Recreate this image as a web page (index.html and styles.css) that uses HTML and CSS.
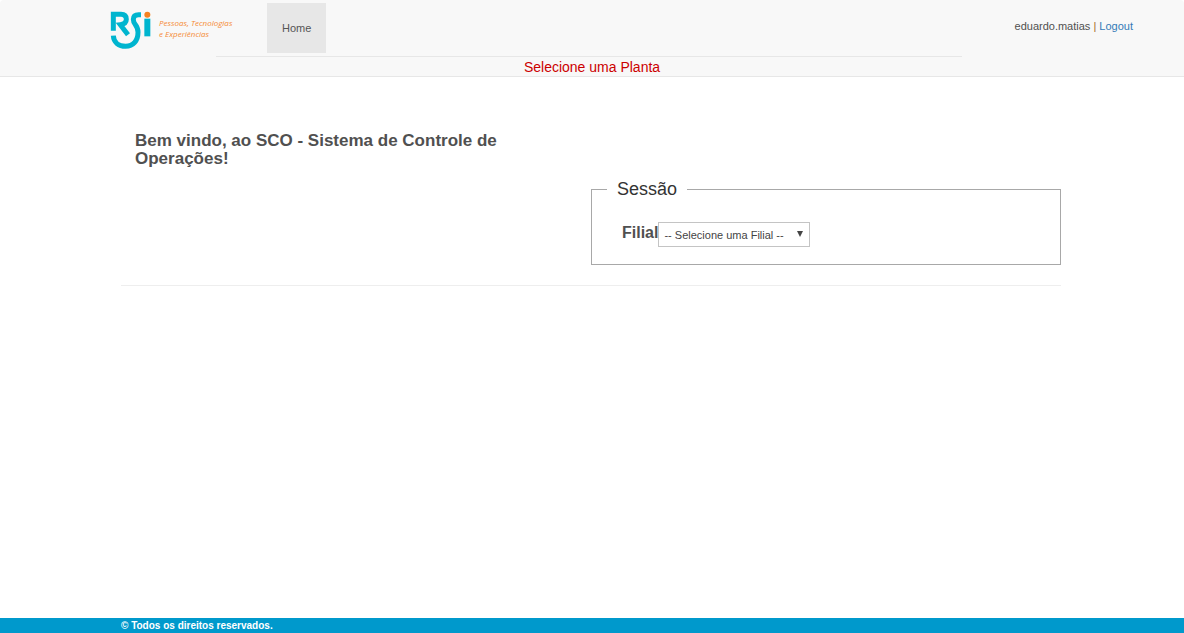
FILE: index.html
```html
<!DOCTYPE html>
<html lang="pt-BR">
<head>
<meta charset="utf-8">
<title>SCO - Sistema de Controle de Operações</title>
<link rel="stylesheet" href="styles.css">
</head>
<body>
<header class="header">
  <div class="bar">
    <div class="brand">
      <svg class="mark" viewBox="30 30 126 120" role="img" aria-label="RSI">
        <g fill="none" stroke="#00b5cf" stroke-width="15">
          <path d="M40 92V43H63Q79 43 79 58Q79 72 61 74L84 104"/>
          <path d="M123 44H116Q100 44 100 58Q100 67 106 74Q114 84 114 97C114 122 100 139 77 139C56 139 41 127 40 107"/>
          <path d="M142 56V109" stroke-width="18"/>
        </g>
        <circle cx="142" cy="44" r="9" fill="#f58220"/>
      </svg>
      <p class="tagline">Pessoas, Tecnologias<br>e Experiências</p>
    </div>
    <nav class="nav"><a class="nav-link" href="#">Home</a></nav>
    <div class="user">eduardo.matias <span class="sep">|</span> <a class="logout" href="#">Logout</a></div>
  </div>
  <p class="notice">Selecione uma Planta</p>
</header>
<main class="container">
  <div class="columns">
    <h1 class="welcome">Bem vindo, ao SCO - Sistema de Controle de Operações!</h1>
    <fieldset class="session">
      <legend class="legend">Sessão</legend>
      <div class="field">
        <label class="label" for="filial">Filial</label>
        <div class="picker">
          <select class="select" id="filial"><option>-- Selecione uma Filial --</option></select>
          <svg class="arrow" viewBox="0 0 6 6" aria-hidden="true"><path d="M0 0H6L3 6Z" fill="#444"/></svg>
        </div>
      </div>
    </fieldset>
  </div>
</main>
<footer class="footer"><p class="copyright">© Todos os direitos reservados.</p></footer>
</body>
</html>
```
FILE: styles.css
```css
* { box-sizing: border-box; }
body {
  margin: 0;
  min-height: 100vh;
  display: flex;
  flex-direction: column;
  background: #fff;
  color: #505050;
  font: 11px/16px "Liberation Sans", Arial, sans-serif;
}
p, h1 { margin: 0; }
a { text-decoration: none; }
.header {
  background: #f8f8f8;
  border-bottom: 1px solid #e7e7e7;
  border-radius: 4px 4px 0 0;
}
.bar {
  display: flex;
  align-items: flex-start;
  padding: 3px 51px 3px 110px;
}
.brand {
  display: flex;
  align-items: flex-start;
  width: 157px;
  padding-top: 7px;
}
.mark { width: 42px; height: 40px; }
.tagline {
  padding: 7px 0 0 7px;
  color: #f58a33;
  font: italic 8px/11px "Open Sans", sans-serif;
  white-space: nowrap;
}
.nav-link {
  display: block;
  padding: 17px 15px;
  background: #e7e7e7;
  color: #555;
}
.user { margin-left: auto; padding-top: 15px; }
.sep { color: #a56b2a; }
.logout { color: #337ab7; }
.notice {
  margin: 0 222px 0 216px;
  padding: 1px 0 0 6px;
  border-top: 1px solid #e7e7e7;
  color: #c00;
  font-size: 14px;
  line-height: 18px;
  text-align: center;
}
.container {
  width: 100%;
  max-width: 970px;
  margin: 0 auto;
  padding: 55px 16px 0 14px;
}
.columns {
  display: grid;
  grid-template-columns: 1fr 1fr;
  padding-bottom: 20px;
  border-bottom: 1px solid #eee;
}
.welcome {
  padding: 0 90px 0 14px;
  font-size: 17px;
  line-height: 18px;
}
.session {
  min-width: 0;
  margin: 45px 0 0;
  padding: 21px 30px 17px;
  border: 1px solid #a8a8a8;
}
.legend {
  margin-left: -15px;
  padding: 0 10px;
  color: #333;
  font-size: 18px;
  line-height: 24px;
}
.field { display: flex; align-items: flex-start; }
.label { font-size: 16px; font-weight: bold; line-height: 22px; }
.picker { position: relative; width: 152px; }
.select {
  display: block;
  width: 100%;
  height: 25px;
  padding: 0 5px;
  border: 1px solid #c4c4c4;
  border-radius: 0;
  background: #fff;
  color: #444;
  font: inherit;
  appearance: none;
}
.arrow {
  position: absolute;
  top: 9px;
  right: 7px;
  width: 6px;
  height: 6px;
  pointer-events: none;
}
.footer { margin-top: auto; background: #09c; }
.copyright {
  max-width: 970px;
  margin: 0 auto;
  padding: 0 14px;
  color: #fff;
  font-size: 10px;
  font-weight: bold;
  line-height: 15px;
}
```
